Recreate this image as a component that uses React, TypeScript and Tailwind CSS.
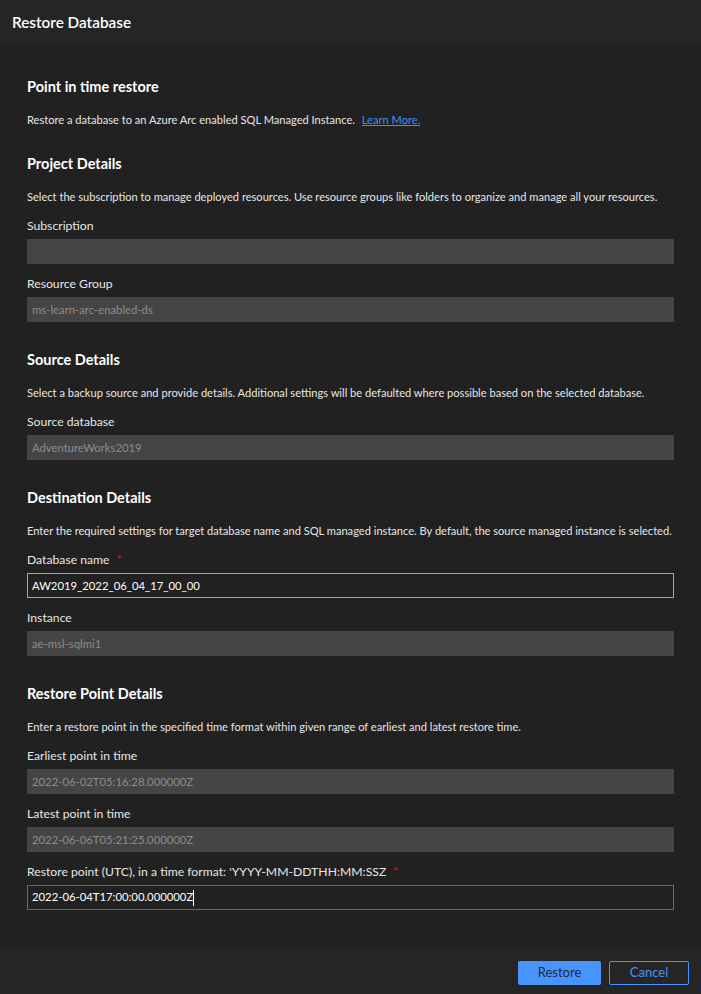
import React from "react"

const font = { fontFamily: 'Lato, "Open Sans", sans-serif' }

const Heading = ({ children }: { children: React.ReactNode }) => (
  <h2 className="h-5 leading-5 text-[14.5px] font-bold text-white">{children}</h2>
)

const Desc = ({ children }: { children: React.ReactNode }) => (
  <p className="mt-[13px] h-5 whitespace-nowrap leading-5 text-[11.1px] text-[#e6e6e6]">{children}</p>
)

const Field = ({
  label,
  value,
  required,
  variant = "disabled",
  first,
}: {
  label: string
  value?: string
  required?: boolean
  variant?: "disabled" | "edit" | "focus"
  first?: boolean
}) => (
  <div className={first ? "mt-[9px]" : "mt-[10px]"}>
    <div className="h-5 leading-5 text-[12.2px] text-[#e6e6e6]">
      {label}
      {required && <span className="ml-[7px] text-[#e81123]">*</span>}
    </div>
    {variant === "disabled" && (
      <div className="mt-[3px] h-[25px] bg-[#454545] px-[5px] text-[11.3px] leading-[25px] text-[#8c8c8c]">{value}</div>
    )}
    {variant === "edit" && (
      <div className="mt-[3px] h-[25px] border border-[#a6a6a6] bg-[#212121] px-[4px] text-[11.3px] leading-[23px] text-white">{value}</div>
    )}
    {variant === "focus" && (
      <div className="mt-[3px] flex h-[25px] items-center border border-[#1a7fd4] bg-[#212121] px-[4px] text-[11.3px] text-white">
        {value}
        <span className="h-[16px] w-px bg-white" />
      </div>
    )}
  </div>
)

export default function App() {
  return (
    <div style={font} className="flex h-[994px] w-[701px] flex-col bg-[#212121]">
      <div className="flex h-[45px] shrink-0 items-center bg-[#252526] px-3 text-[15.3px] font-semibold text-white">
        Restore Database
      </div>

      <div className="flex-1 px-[27px] pt-8">
        <Heading>Point in time restore</Heading>
        <Desc>
          Restore a database to an Azure Arc enabled SQL Managed Instance.{" "}
          <a className="ml-1 text-[#3794ff] underline">Learn More.</a>
        </Desc>

        <div className="mt-6">
          <Heading>Project Details</Heading>
          <Desc>
            Select the subscription to manage deployed resources. Use resource groups like folders to organize and manage all your resources.
          </Desc>
          <Field first label="Subscription" value="" />
          <Field label="Resource Group" value="ms-learn-arc-enabled-ds" />
        </div>

        <div className="mt-[28px]">
          <Heading>Source Details</Heading>
          <Desc>
            Select a backup source and provide details. Additional settings will be defaulted where possible based on the selected database.
          </Desc>
          <Field first label="Source database" value="AdventureWorks2019" />
        </div>

        <div className="mt-[28px]">
          <Heading>Destination Details</Heading>
          <Desc>
            Enter the required settings for target database name and SQL managed instance. By default, the source managed instance is selected.
          </Desc>
          <Field first label="Database name" required variant="edit" value="AW2019_2022_06_04_17_00_00" />
          <Field label="Instance" value="ae-msl-sqlmi1" />
        </div>

        <div className="mt-[28px]">
          <Heading>Restore Point Details</Heading>
          <Desc>
            Enter a restore point in the specified time format within given range of earliest and latest restore time.
          </Desc>
          <Field first label="Earliest point in time" value="2022-06-02T05:16:28.000000Z" />
          <Field label="Latest point in time" value="2022-06-06T05:21:25.000000Z" />
          <Field
            label="Restore point (UTC), in a time format: 'YYYY-MM-DDTHH:MM:SSZ"
            required
            variant="focus"
            value="2022-06-04T17:00:00.000000Z"
          />
        </div>
      </div>

      <div className="flex h-12 shrink-0 items-start justify-end gap-2 bg-[#252526] pt-[15px] pr-3">
        <button className="h-6 w-[83px] rounded-[2px] bg-[#4894fe] text-[13px] text-[#1e2a3a]">Restore</button>
        <button className="h-6 w-[80px] rounded-[2px] border border-[#4894fe] text-[13px] text-[#4894fe]">Cancel</button>
      </div>
    </div>
  )
}
